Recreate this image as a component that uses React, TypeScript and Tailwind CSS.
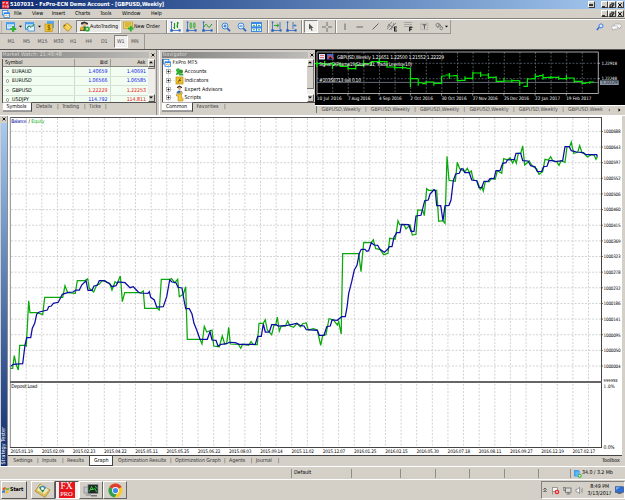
import type { ReactNode } from "react";

type Point = [number, number];

// Equity line of the strategy tester graph
const equity: Point[] = [
  [10, 368.3], [12.7, 368.3], [14.3, 355.7], [16, 364], [18.3, 370], [19.7, 345.3], [24.7, 345.3],
  [26.3, 346], [28.7, 300.7], [30, 312.7], [37.3, 312.7], [42.7, 314.7], [44.7, 297.3], [62.7, 297.3],
  [65, 285.7], [67.7, 292.7], [75.3, 293.3], [77.3, 280.7], [84.7, 280.7], [87.7, 278.7], [89.3, 288.3],
  [93.7, 292], [96.7, 285], [99.3, 284.3], [102, 280.7], [106, 281.7], [110, 284], [112, 290],
  [115, 281.7], [117.3, 283.3], [120.3, 276], [121, 283.3], [122.3, 301.7], [124.7, 292.7], [141, 292.7],
  [143.3, 291], [144.7, 308.3], [157.3, 308.3], [159.3, 310], [161.3, 279.3], [170, 279.3], [171.5, 278.5],
  [174.7, 282.7], [177.7, 279.3], [179.3, 296.7], [183.3, 294.3], [185.7, 286.7], [187.3, 339.3],
  [200, 339.3], [202, 344], [204.3, 326.3], [206.7, 332], [212, 330], [213.7, 346], [219.3, 346.7],
  [222.3, 336], [224.7, 344], [226.7, 343.3], [228.7, 327.3], [230.3, 344], [238.3, 344.3],
  [240.7, 348.3], [242.7, 344.3], [248.7, 345.3], [251, 341.7], [253.3, 344.7], [257.3, 344.7],
  [259, 323.3], [263.3, 323.3], [265.3, 319.7], [267.3, 330], [271.7, 334.7], [274, 325], [275.7, 325],
  [277.3, 317], [279.3, 331], [281.3, 326], [285.3, 326], [287.7, 321], [290, 326], [293.7, 327.3],
  [297, 323.3], [300.3, 326.7], [303, 323.5], [306.3, 323], [308.3, 330], [313.3, 328.7], [317.3, 330],
  [320.7, 345.3], [322.7, 335.3], [326, 334.7], [329, 318.7], [333.3, 319.7], [337.3, 325],
  [338.7, 321.7], [341.2, 334], [342.7, 253.7], [358.7, 253.7], [361, 271.7], [363.7, 242.3],
  [371.3, 242.7], [373.3, 239.7], [375.7, 248.7], [380, 249.3], [383.7, 254.7], [388, 253.3],
  [389.7, 238.3], [395.3, 239], [398, 220.7], [399.7, 224.7], [404, 224.7], [406, 229], [410, 225],
  [412.3, 235], [416, 234.3], [417.7, 210], [422.7, 210], [424.3, 215.7], [426.7, 188.7],
  [428.7, 190.3], [436.7, 190.3], [438.7, 221.3], [442.7, 220.7], [445, 223.3], [447, 156.3],
  [449, 180.3], [455.3, 181.3], [457.3, 162.3], [459.7, 168.7], [465, 171.7], [467.3, 168.3],
  [469.3, 172.7], [471.3, 171], [473.3, 180], [477, 180.7], [480.3, 189.3], [482, 186.7], [483.3, 191],
  [485.3, 181.7], [489.3, 181.7], [491.3, 178.3], [495.3, 179.3], [497.3, 170.7], [501.7, 173.3],
  [503.7, 158.7], [507.7, 160], [510, 157.7], [512.7, 163], [514.7, 159], [516.3, 163.3],
  [518.3, 153.3], [520.7, 153.3], [522.7, 146], [524.7, 165], [529.3, 161], [532, 165.7], [536.7, 169],
  [539, 174.3], [542.7, 171.7], [545, 159.3], [548.3, 160], [550.7, 156.7], [552.7, 160.7],
  [556.7, 161.7], [559, 165.3], [561, 160.7], [565, 162.3], [567, 146.7], [569.7, 146.7], [571.3, 142],
  [573.7, 153.3], [577.7, 152.3], [579.7, 145.7], [582, 152.7], [584.7, 154], [587.3, 157],
  [591.3, 154.7], [594, 155], [596, 159.3], [597.3, 156.7],
];

const balance: Point[] = [
  [10, 366.7], [13.3, 364.3], [22.7, 363.7], [25, 345], [26.7, 337.7], [30.7, 337.7], [32.3, 328.3],
  [34.7, 323.3], [36.7, 314], [39.3, 312], [47.3, 310], [48.7, 306.7], [51.3, 306], [53.3, 303.3],
  [58.3, 302.3], [62.3, 294.3], [68.3, 292.3], [73, 292], [76, 290], [79.3, 290], [81.7, 285],
  [86, 280.7], [88, 290.3], [92, 290.3], [94, 286], [97.3, 285.3], [99.3, 280.7], [104.7, 280.7],
  [107.3, 282.7], [109, 283], [112, 286.7], [116, 285.7], [118, 282], [125, 282.7], [130, 287.7],
  [133.3, 286.7], [138.3, 292], [140, 293], [148, 293.3], [149.3, 291.7], [150.7, 297.3],
  [154.3, 300], [156.7, 307], [163.3, 306.7], [166.7, 296.7], [169.7, 280], [172, 282],
  [176, 282.7], [178, 287.3], [182, 288], [184, 300], [185.7, 308.7], [189.3, 308.7], [192, 314],
  [194, 323.3], [196.7, 330], [200, 339.3], [207.3, 339.3], [210, 331.7], [212, 340], [216, 340.3],
  [218, 346], [221.3, 344.3], [226.7, 343.7], [229.3, 342.3], [235.3, 342.7], [239.3, 344.3],
  [255.3, 344.3], [257.7, 336.3], [261.3, 336.3], [263.3, 324], [265.3, 332], [269.3, 332],
  [271.7, 324.7], [276, 324.7], [278.3, 326], [287.3, 325.3], [296.7, 323.3], [300.7, 325.7],
  [304, 326], [306.3, 329.7], [317.3, 330.3], [319.3, 335.3], [324, 335.3], [326.7, 326.7],
  [330.3, 326], [332, 320], [337.3, 320.3], [341.7, 316.7], [345.3, 316.7], [347, 307.3],
  [348.7, 293.3], [351.7, 281.7], [354.3, 270], [357, 265.3], [359.3, 253.3], [361.3, 249.3],
  [365, 249.3], [366.7, 251.3], [368.7, 250.7], [371.3, 242.7], [374, 245], [377.7, 245.3],
  [380, 249.3], [384.3, 252.3], [387.7, 249.3], [389.3, 246.7], [392, 246.7], [394, 237.3],
  [396.7, 232.7], [400, 232.7], [401.5, 224.5], [408.7, 224.7], [411, 231.3], [414, 231.3],
  [416, 216], [421, 215.3], [424.7, 200.7], [428.3, 200], [430, 194], [434, 189.7], [435.3, 190.7],
  [436.7, 205.7], [440.7, 205.7], [443, 220.7], [445, 205.7], [449, 205.3], [451, 200],
  [453.3, 180.7], [455.7, 174], [459.3, 173.3], [461.3, 168.7], [463.3, 169], [464.7, 172.7],
  [469.3, 172.7], [471.7, 180], [476.7, 180.7], [479, 187.7], [481.7, 187.7], [484, 181.3],
  [488, 181.3], [490, 178.7], [494, 178.7], [496, 170.7], [500, 170.7], [502.7, 163.3], [506, 162.7],
  [507.3, 160], [514.3, 159.3], [516, 153.3], [520.7, 153.3], [522.7, 160.7], [528, 161],
  [530.7, 165.7], [535, 166.7], [537.3, 171.7], [541.7, 171.3], [543.7, 166.7], [547, 166.3],
  [549, 160.7], [552.7, 160.7], [555.3, 161.7], [562.7, 160.7], [565, 146.7], [569.3, 146.7],
  [571.3, 150.7], [576.7, 152], [583.3, 152.7], [586, 154.7], [596.7, 154.7], [597.3, 156.7],
];

const axisValues = [
  "1000688", "1000643", "1000597", "1000552", "1000506", "1000460", "1000415", "1000369",
  "1000323", "1000278", "1000232", "1000186", "1000141", "1000095", "1000050", "1000004",
];

const axisDates = [
  "2015.01.19", "2015.02.09", "2015.02.23", "2015.04.22", "2015.05.11", "2015.05.25", "2015.06.22",
  "2015.08.03", "2015.09.14", "2015.11.02", "2015.12.07", "2016.01.25", "2016.02.15", "2016.05.30",
  "2016.07.18", "2016.08.11", "2016.09.27", "2016.12.19", "2017.02.17",
];

// [high, low, open, close] of each weekly bar
const weeklyBars = [
  [44, 60, 50, 50], [42, 58, 50, 52], [46, 66, 50, 52], [46, 60, 54, 58], [50, 68, 58, 65],
  [48, 68, 65, 55], [40, 60, 55, 50], [42, 56, 50, 44], [34, 50, 44, 44], [42, 62, 44, 60],
  [52, 68, 60, 62], [55, 67, 62, 62], [62, 120, 64, 95], [95, 116, 95, 107], [102, 112, 110, 105],
  [104, 116, 105, 109], [87, 110, 109, 87], [78, 95, 84, 87], [84, 102, 86, 101], [88, 102, 100, 94],
  [74, 98, 94, 78], [74, 90, 78, 84], [78, 96, 84, 91], [88, 106, 91, 103], [93, 104, 103, 102],
  [97, 107, 102, 101], [102, 116, 101, 108], [93, 120, 118, 96], [80, 98, 95, 88], [80, 98, 86, 92],
  [86, 96, 91, 91], [88, 98, 91, 95], [84, 99, 95, 93], [92, 108, 93, 103], [102, 112, 103, 109],
  [103, 110, 107, 105],
];

const weeklyDates = [
  "10 Jul 2016", "7 Aug 2016", "4 Sep 2016", "2 Oct 2016", "30 Oct 2016",
  "27 Nov 2016", "25 Dec 2016", "22 Jan 2017", "19 Feb 2017",
];

const menu = [
  { label: "File", width: 18 },
  { label: "View", width: 19.7 },
  { label: "Insert", width: 23.3 },
  { label: "Charts", width: 25 },
  { label: "Tools", width: 22 },
  { label: "Window", width: 29 },
  { label: "Help", width: 20 },
];

const timeframes = [
  { label: "M1", width: 15.5 },
  { label: "M5", width: 14.5 },
  { label: "M15", width: 16 },
  { label: "M30", width: 16.5 },
  { label: "H1", width: 15.5 },
  { label: "H4", width: 15.5 },
  { label: "D1", width: 13 },
  { label: "W1", width: 13.5, active: true },
  { label: "MN", width: 16.5 },
];

const quotes = [
  { symbol: "EURAUD", bid: "1.40659", ask: "1.40691", up: true },
  { symbol: "EURUSD", bid: "1.06566", ask: "1.06585", up: true },
  { symbol: "GBPUSD", bid: "1.22229", ask: "1.22253", up: false },
  { symbol: "USDJPY", bid: "114.792", ask: "114.811", up: true, askDown: true },
];

const testerTabs = [
  { label: "Settings", width: 28.7 },
  { label: "Inputs", width: 25 },
  { label: "Results", width: 22.5 },
  { label: "Graph", width: 23.5, active: true },
  { label: "Optimization Results", width: 57 },
  { label: "Optimization Graph", width: 54 },
  { label: "Agents", width: 26.7 },
  { label: "Journal", width: 27 },
];

const statusCells = [59.5, 49, 35.5, 34, 34.5, 34.5, 31.5];

function Svg({ w, h, children }: { w: number; h: number; children: ReactNode }) {
  return (
    <svg className="shrink-0" width={w} height={h} viewBox={`0 0 ${w} ${h}`} fill="none">
      {children}
    </svg>
  );
}

function WindowButton({ kind }: { kind: "arrows" | "min" | "restore" | "close" }) {
  return (
    <div className="flex h-[7px] w-[7.5px] shrink-0 items-center justify-center border-[0.5px] border-t-white border-r-[#404040] border-b-[#404040] border-l-white bg-[#d4d0c8]">
      <Svg w={6} h={6}>
        {kind === "arrows" && <path d="M1 3h4M2 2v2M4 2v2" stroke="#000" />}
        {kind === "min" && <path d="M1 4.8h3" stroke="#000" />}
        {kind === "restore" && <path d="M2.2 1.2h2.6v2H4M1 2.8h2.6v2.2H1z" stroke="#000" strokeWidth=".9" />}
        {kind === "close" && <path d="M1.2 1.2l3.4 3.6M4.6 1.2L1.2 4.8" stroke="#000" />}
      </Svg>
    </div>
  );
}

function Divider() {
  return <div className="h-[13px] w-[2px] shrink-0 border-l border-[#8c8a84] bg-white" />;
}

function Caret() {
  return (
    <Svg w={3} h={3}>
      <path d="M0 .8h3L1.5 2.5z" fill="#000" />
    </Svg>
  );
}

// Blue L-shaped axes shared by the chart type icons
function Axes({ children }: { children?: ReactNode }) {
  return (
    <Svg w={11} h={11}>
      <path d="M1.5 1v8.5H10" stroke="#3a74c4" strokeWidth=".9" />
      <path d="M.3 8.3h2.4v2.4H.3zM8.6 8.3h2v2.2h-2zM.8.5h1.5v1.6H.8z" fill="#2460c0" />
      {children}
    </Svg>
  );
}

function WindowsIcon({ badge }: { badge?: string }) {
  return (
    <Svg w={11} h={10}>
      <rect x=".5" y=".8" width="8" height="6.4" fill="#d8ecff" stroke="#3b8ee0" />
      <rect x="0" y=".3" width="9" height="2" fill="#4aa0ee" />
      {badge ? (
        <>
          <path d="M2 4h4" stroke="#7ab8ee" strokeWidth=".8" />
          <path d="M7.2 4v6M4.2 7h6" stroke={badge} strokeWidth="2.2" />
        </>
      ) : (
        <>
          <rect x="3" y="4" width="6.5" height="5" fill="#e8f4ff" stroke="#3b8ee0" strokeWidth=".8" />
          <path d="M1.5 6.5L4 4l2 1.5L9.5 2" stroke="#2e9a35" />
        </>
      )}
    </Svg>
  );
}

function LayersIcon() {
  return (
    <Svg w={8} h={8}>
      <rect x=".4" y=".5" width="5.4" height="4.5" fill="#fff" stroke="#2b87dc" strokeWidth=".8" />
      <rect x="2" y="2.8" width="5.5" height="4.6" fill="#fff" stroke="#2b87dc" strokeWidth=".8" />
      <path d="M2 3.4h5.5" stroke="#2b87dc" strokeWidth="1.3" />
      <path d="M3 6l1.3-1L5.5 6l1.3-1" stroke="#e07818" strokeWidth=".7" />
    </Svg>
  );
}

function TitleBar() {
  return (
    <header className="flex h-[9px] items-center bg-linear-to-r from-[#0f2b72] to-[#a6caf0] pl-[1.5px] pr-[1px]">
      <Svg w={7} h={8}>
        <rect width="7" height="7.5" fill="#e3202b" />
        <path d="M1 1.4h2M1 1v2.3M4 1l2 2.2M6 1L4 3.2M1 4.5v2M1 5h1.6M3.4 4.7v1.8M5 4.8h1.4v1.4H5z" stroke="#fff" strokeWidth=".6" />
      </Svg>
      <div className="ml-[1.5px] flex-1 whitespace-nowrap text-[5.5px] font-bold tracking-[-0.04px] text-white">
        5107031 - FxPro-ECN Demo Account - [GBPUSD,Weekly]
      </div>
      <WindowButton kind="arrows" />
      <div className="w-[5.5px]" />
      <WindowButton kind="min" />
      <WindowButton kind="restore" />
      <div className="w-[1px]" />
      <WindowButton kind="close" />
    </header>
  );
}

function MenuBar() {
  return (
    <nav className="flex h-[10px] items-center border-b border-[#85837d] pl-[2px] pr-[1px]">
      <LayersIcon />
      <div className="ml-[4px] flex flex-1">
        {menu.map((item) => (
          <div key={item.label} className="whitespace-nowrap" style={{ width: item.width }}>
            {item.label}
          </div>
        ))}
      </div>
      <WindowButton kind="min" />
      <WindowButton kind="restore" />
      <div className="w-[1px]" />
      <WindowButton kind="close" />
    </nav>
  );
}

function Toolbar() {
  return (
    <div className="flex h-[15px] items-center border-t border-white">
      <div className="flex h-[14px] w-[450.5px] shrink-0 items-center border-r border-b border-[#9b9993] pl-[1px]">
        <div className="h-[12px] w-[1px] border-l border-[#b5b2aa]" />
        <div className="flex w-[56px] items-center pl-[4px]">
          <WindowsIcon badge="#35b235" />
          <div className="w-[1.5px]" />
          <Caret />
          <div className="w-[3.5px]" />
          <WindowsIcon />
          <div className="w-[1.5px]" />
          <Caret />
          <div className="w-[3.5px]" />
          <Svg w={11} h={11}>
            <rect x="3" y="0" width="7" height="7" fill="#5aa6ec" />
            <rect x="1" y="3" width="7.5" height="7.5" fill="#f0c22c" stroke="#b98a10" strokeWidth=".6" />
            <path d="M6.3 4.6H4v2h2v2H3.4M5 3.8v5.6" stroke="#7c5a06" strokeWidth=".7" />
          </Svg>
        </div>
        <Divider />
        <div className="w-[15.5px] pl-[1.5px]">
          <Svg w={11} h={10}>
            <path d="M1 5l4-4 5 4-4 4.5z" fill="#f0c43a" stroke="#b88a1c" strokeWidth=".7" />
            <path d="M3.5 4.5l3.5 3M5 3l3 3" stroke="#fff3b0" strokeWidth=".8" />
            <circle cx="2.5" cy="3.5" r="1" fill="#8a6414" />
          </Svg>
        </div>
        <div className="flex h-[13px] w-[45.5px] items-center border-[0.5px] border-t-[#808080] border-r-white border-b-white border-l-[#808080] bg-[#eceae6] pl-[2px]">
          <Svg w={11} h={11}>
            <path d="M2 1.5l3.5-1L9 2v1.5H2z" fill="#333" />
            <circle cx="5.5" cy="4" r="1.8" fill="#e4b98c" />
            <path d="M1 10c0-4 2-4.5 4.5-4.5S8 7 8 10z" fill="#4a4a4a" />
            <circle cx="3" cy="7.5" r="2" fill="#dcae28" />
            <circle cx="8.3" cy="8" r="2.6" fill="#2fae37" />
            <path d="M7.5 6.7v2.6l2.1-1.3z" fill="#fff" />
          </Svg>
          <span className="ml-[0.5px] whitespace-nowrap">AutoTrading</span>
        </div>
        <div className="flex w-[45px] items-center pl-[1.5px]">
          <Svg w={11} h={11}>
            <rect x=".5" y="1" width="9" height="6.5" fill="#f4d254" stroke="#c19a1c" strokeWidth=".7" />
            <path d="M2 3h6M2 5h4" stroke="#9a7510" strokeWidth=".6" />
            <path d="M7.8 4.8v5.6M5 7.6h5.6" stroke="#35ae38" strokeWidth="2" />
          </Svg>
          <span className="ml-[0.5px] whitespace-nowrap tracking-[0.05px]">New Order</span>
        </div>
        <Divider />
        <div className="flex h-[13px] w-[14.5px] items-center justify-center bg-[#f1efec]">
          <Axes>
            <path d="M4.5 2v6M3.5 6.5h1M7.5 1v6M7.5 2H9M6.3 5h1.2" stroke="#1b9a22" strokeWidth="1.1" />
          </Axes>
        </div>
        <div className="w-[18px] pl-[3.5px]">
          <Axes>
            <path d="M4 2.5h1.6v4H4zM7.4 2.5H9.200v3.8H7.4zM4.8 1v7M8.3 1v7" stroke="#3cae3e" strokeWidth=".7" />
          </Axes>
        </div>
        <div className="w-[15.5px] pl-[1.5px]">
          <Axes>
            <path d="M2 6c2-4 2.5-3 4-.5S8 5 10 3" stroke="#1b9a22" />
          </Axes>
        </div>
        <Divider />
        {["M5.5 4h-3M4 2.5v3", "M5.5 4h-3"].map((d) => (
          <div key={d} className="w-[15.5px] pl-[3px]">
            <Svg w={10} h={10}>
              <path d="M6 6l3 3.2" stroke="#2c62ba" strokeWidth="1.8" />
              <circle cx="4" cy="4" r="3" fill="#e4f2ff" stroke="#3f88dc" />
              <path d={d} stroke="#1b56b8" strokeWidth=".9" />
            </Svg>
          </div>
        ))}
        <div className="w-[18px] pl-[2px]">
          <Svg w={11} h={10}>
            <rect width="11" height="10" fill="#3b8be4" />
            <path d="M1 2h4v2.3H1zM6 2h4v2.3H6zM1 6.5h4V9H1zM6 6.5h4V9H6z" fill="#e8f6ff" />
            <path d="M2 3.4h2M7 3.4h2M2 7.8h2M7 7.8h2" stroke="#2ea23a" strokeWidth=".9" />
          </Svg>
        </div>
        <Divider />
        <div className="w-[16px] pl-[1.5px]">
          <Axes>
            <path d="M3 4.5h4M6 2.8l2 1.7-2 1.7" stroke="#28a32e" />
            <path d="M9 1v7" stroke="#2c68c0" strokeWidth=".8" />
          </Axes>
        </div>
        <div className="w-[16px] pl-[1px]">
          <Axes>
            <path d="M7 1v7" stroke="#2c68c0" strokeWidth=".8" />
            <path d="M10.5 4.5H8M9.2 3.2L8 4.5l1.2 1.3" stroke="#2c68c0" strokeWidth=".8" />
          </Axes>
        </div>
        <Divider />
        <div className="ml-[0.5px] flex h-[13px] w-[14.5px] items-center justify-center border-[0.5px] border-t-[#808080] border-r-white border-b-white border-l-[#808080] bg-[#f1efec]">
          <Svg w={6} h={8}>
            <path d="M1 .5v6l1.5-1.3L3.6 8l1-.5-1-2.4h1.9z" fill="#555" />
          </Svg>
        </div>
        <div className="w-[17px] pl-[4px]">
          <Svg w={10} h={10}>
            <path d="M5 0v4M5 6v4M0 5h4M6 5h4" stroke="#555" strokeWidth=".8" />
          </Svg>
        </div>
        <Divider />
        <div className="w-[18px] pl-[5.5px]">
          <Svg w={4} h={8}>
            <path d="M2 .5v6.5" stroke="#666" />
          </Svg>
        </div>
        <div className="w-[16px]">
          <Svg w={9} h={8}>
            <path d="M1.5 4h6.5" stroke="#666" />
          </Svg>
        </div>
        <div className="w-[16px]">
          <Svg w={9} h={9}>
            <path d="M1.5 7.5l6-6" stroke="#666" />
          </Svg>
        </div>
        <div className="w-[16.5px]">
          <Svg w={11} h={11}>
            <path d="M0 6l5-5M2 9l7-7M0 8.5L3 4M4 9L7 2M1 3l6 4" stroke="#777" strokeWidth=".8" />
            <path d="M7.5 6v4M7 6h3M7 8h2.6M7 10h3" stroke="#111" strokeWidth=".9" />
          </Svg>
        </div>
        <div className="w-[16px]">
          <Svg w={11} h={11}>
            <path d="M0 1.5h8M0 3.5h8M0 5.5h8" stroke="#999" strokeWidth=".8" />
            <path d="M5.7 6v4.2M5.5 6.3h3M5.5 8.2h2.4" stroke="#111" strokeWidth="1.1" />
          </Svg>
        </div>
        <div className="w-[15.5px]">
          <Svg w={9} h={9}>
            <rect x=".8" y="1.2" width="7" height="6.5" stroke="#888" strokeWidth=".6" strokeDasharray="1 .8" />
            <path d="M2.4 2.8h4M4.4 2.8v4" stroke="#555" />
          </Svg>
        </div>
        <div className="w-[10px]">
          <Svg w={9} h={9}>
            <circle cx="2.5" cy="3" r="1.6" stroke="#666" strokeWidth=".7" />
            <path d="M3.5 1l3.3 4M2 5.8L6 3" stroke="#666" strokeWidth=".7" />
            <circle cx="6.3" cy="6.3" r="1.4" stroke="#666" strokeWidth=".7" />
          </Svg>
        </div>
        <Caret />
      </div>
      <div className="ml-auto flex items-center gap-[7px] pr-[3px]">
        <Svg w={8} h={8}>
          <path d="M3.3 4.3L.8 7" stroke="#3068d0" strokeWidth="1.5" />
          <circle cx="5" cy="2.9" r="2" fill="#dcebff" stroke="#3b7ade" />
        </Svg>
        <Svg w={11} h={8}>
          <path d="M4.5 1h4c2.5 0 2.5 3.5.5 3.7V6L7.5 4.7h-3c-2-.3-2-3.5 0-3.7z" fill="#f6f6f6" stroke="#999" strokeWidth=".6" />
          <path d="M2.3 3h3c1.8 0 1.8 3 0 3H3.5L2 7.3V6C0 5.5.5 3 2.3 3z" fill="#fff" stroke="#999" strokeWidth=".6" />
        </Svg>
      </div>
    </div>
  );
}

function TimeframeBar() {
  return (
    <div className="flex h-[15px] items-center">
      <div className="ml-[1px] flex h-[15px] items-center border-r border-[#9b9993] pl-[6.5px] text-[#4a4a4a]">
        {timeframes.map((t) =>
          t.active ? (
            <div
              key={t.label}
              className="mr-[3.5px] flex h-[13.5px] items-center justify-center border-[0.5px] border-t-[#808080] border-r-white border-b-white border-l-[#808080] bg-[#f1efec]"
              style={{ width: t.width }}
            >
              {t.label}
            </div>
          ) : (
            <div key={t.label} style={{ width: t.width - (t.label === "MN" ? 3.5 : 0) }}>
              {t.label}
            </div>
          ),
        )}
      </div>
    </div>
  );
}

function PanelTitle({ title }: { title: string }) {
  return (
    <div className="flex h-[6px] items-center">
      <div className="flex h-[5.5px] flex-1 items-center bg-linear-to-r from-[#828282] to-[#bdbcb9] pl-[1px] tracking-[0.1px] text-[#dedcd6]">
        {title}
      </div>
      <div className="flex w-[7px] justify-center">
        <Svg w={4} h={4}>
          <path d="M.6.6l2.8 2.8M3.4.6L.6 3.4" stroke="#000" strokeWidth=".9" />
        </Svg>
      </div>
    </div>
  );
}

function ScrollBar({ thumb }: { thumb: number }) {
  const button =
    "flex h-[8px] items-center justify-center border-[0.5px] border-t-white border-r-[#555] border-b-[#555] border-l-white bg-[#d4d0c8]";
  return (
    <div className="flex w-[7.5px] shrink-0 flex-col bg-[#efedea]">
      <div className={button}>
        <Svg w={4} h={3}>
          <path d="M0 2.3l2-2 2 2z" fill="#000" />
        </Svg>
      </div>
      <div className="border-r border-b border-[#777] bg-[#d4d0c8]" style={{ height: thumb }} />
      <div className="flex-1" />
      <div className={button}>
        <Svg w={4} h={3}>
          <path d="M0 .5l2 2 2-2z" fill="#000" />
        </Svg>
      </div>
    </div>
  );
}

function MarketWatch() {
  return (
    <section className="flex w-[157px] shrink-0 flex-col border-r border-[#8f8d87] pt-[2px] pl-[1.5px]">
      <PanelTitle title="Market Watch: 21:49:48" />
      <div className="mt-[0.5px] flex h-[44px] border-b border-l border-[#555] pr-[1px]">
        <div className="flex-1 overflow-hidden bg-[#f0fdf0]">
          <div className="flex h-[8.5px] items-center border-b border-[#8a8882] bg-[#d4d0c8]">
            <div className="w-[71px] pl-[2.5px]">Symbol</div>
            <div className="h-full border-l border-[#9b9993]" />
            <div className="w-[35px] pr-[2px] text-right">Bid</div>
            <div className="h-full border-l border-[#9b9993]" />
            <div className="flex-1 pr-[2px] text-right">Ask</div>
          </div>
          {quotes.map((q) => (
            <div key={q.symbol} className="flex h-[9.6px] items-center border-b-[0.5px] border-[#d6e2d6]">
              <div className="flex h-full w-[71px] items-center pl-[3px]">
                <span className="mr-[3px] size-[3.5px] rounded-full border border-[#8f8f8f] bg-white" />
                {q.symbol}
              </div>
              <div className="h-full border-l border-[#d0dcd0]" />
              <div className={q.up ? "w-[35px] pr-[2px] text-right text-[#1616f0]" : "w-[35px] pr-[2px] text-right text-[#f01616]"}>
                {q.bid}
              </div>
              <div className="h-full border-l border-[#d0dcd0]" />
              <div className={q.up && !q.askDown ? "flex-1 pr-[1.5px] text-right text-[#1616f0]" : "flex-1 pr-[1.5px] text-right text-[#f01616]"}>
                {q.ask}
              </div>
            </div>
          ))}
        </div>
        <ScrollBar thumb={2} />
      </div>
      <div className="flex h-[9px] items-center text-[#3a3a3a]">
        <div className="ml-[1px] flex h-[9px] w-[29px] -translate-y-[0.5px] items-center justify-center border-r border-b border-[#444] bg-white text-black">
          Symbols
        </div>
        <div className="ml-[4.5px] w-[21px]">Details</div>
        <div className="w-[5px]">|</div>
        <div className="w-[22px]">Trading</div>
        <div className="w-[5px]">|</div>
        <div className="w-[16px]">Ticks</div>
        <div>|</div>
      </div>
    </section>
  );
}

function TreeRow({ label, children }: { label: string; children: ReactNode }) {
  return (
    <div className="flex h-[8.7px] items-center pl-[3px]">
      <Svg w={9} h={9}>
        <path d="M2.5 0v9M2.5 4.5h6" stroke="#aaa" strokeWidth=".5" strokeDasharray=".7 .7" />
        <rect x=".5" y="2.5" width="4" height="4" fill="#fff" stroke="#888" strokeWidth=".6" />
        <path d="M1.3 4.5h2.4M2.5 3.3v2.4" stroke="#000" strokeWidth=".7" />
      </Svg>
      <Svg w={9} h={9}>{children}</Svg>
      <span className="ml-[1px] tracking-[0.05px]">{label}</span>
    </div>
  );
}

function Navigator() {
  return (
    <section className="flex w-[156px] shrink-0 flex-col border-l border-white pt-[2px] pl-[1.5px]">
      <PanelTitle title="Navigator" />
      <div className="mt-[0.5px] flex h-[44px] border-b border-l border-[#555] pr-[1px]">
        <div className="flex-1 overflow-hidden bg-white">
          <div className="flex h-[9px] items-center pl-[0.5px]">
            <LayersIcon />
            <span className="ml-[1.5px] tracking-[0.05px]">FxPro MT5</span>
          </div>
          <TreeRow label="Accounts">
            <circle cx="3" cy="3.3" r="2" fill="#36b43a" />
            <circle cx="6" cy="4.5" r="2" fill="#249628" />
            <path d="M1 8c0-4 4-4 4-1M4 8.5c0-3 4.5-3 4.5 0z" fill="#2fa834" />
          </TreeRow>
          <TreeRow label="Indicators">
            <rect x="1" y="1" width="7" height="7" fill="#f0c030" stroke="#b78c14" strokeWidth=".7" />
            <path d="M5.8 2.5c-2-.5-1 4-3 4M3.5 4.5h2.5" stroke="#6b4e08" strokeWidth=".8" />
          </TreeRow>
          <TreeRow label="Expert Advisors">
            <path d="M2 2L4.5.5 7 2v1H2z" fill="#333" />
            <circle cx="4.5" cy="3.5" r="1.4" fill="#d8a878" />
            <path d="M1.5 8.5c0-4 6-4 6 0z" fill="#3c6fb4" />
            <path d="M5 6l3.5 2.5H5z" fill="#e0b030" />
          </TreeRow>
          <TreeRow label="Scripts">
            <path d="M1.5 1h5v4H8v3H3V3H1.5z" fill="#f2c63c" stroke="#b88a18" strokeWidth=".6" />
          </TreeRow>
        </div>
        <ScrollBar thumb={22} />
      </div>
      <div className="flex h-[9px] items-center text-[#3a3a3a]">
        <div className="flex h-[9px] w-[31px] -translate-y-[0.5px] items-center justify-center border-r border-b border-[#444] bg-white text-black">
          Common
        </div>
        <div className="ml-[4px] w-[27.5px] tracking-[0.05px]">Favorites</div>
        <div>|</div>
      </div>
    </section>
  );
}

function WeeklyChart() {
  return (
    <svg className="block" width="310" height="55" viewBox="315 49 310 55" fontFamily='"DejaVu Sans Condensed", "DejaVu Sans", sans-serif'>
      <rect x="315" y="49" width="310" height="55" fill="#000" />
      {Array.from({ length: 17 }, (_, i) => (
        <path key={i} d={`M${332.7 + i * 15.6} 51V92`} stroke="#5c6675" strokeWidth=".8" strokeDasharray="2 1.5" />
      ))}
      <path d="M317 62.3H598M317 77.7H598" stroke="#5c6675" strokeWidth=".8" strokeDasharray="2 1.5" />
      <path d="M317 81.4H598" stroke="#7d8794" strokeWidth=".8" />
      <path d="M317 51H598.3V92.5H317z" stroke="#b8b8b8" strokeWidth=".9" fill="none" />
      <path d="M598 62.3h2M598 77.7h2" stroke="#b8b8b8" strokeWidth=".8" />
      {weeklyBars.map(([high, low, open, close], i) => {
        const x = 316.8 + i * 7.8;
        const y = (v: number) => 46 + v / 3;
        return (
          <path
            key={i}
            d={`M${x} ${y(high)}V${y(low)}M${x - 4} ${y(open)}H${x}M${x} ${y(close)}H${x + 4}`}
            fill="none"
            stroke="#00e800"
            strokeWidth="1.2"
          />
        );
      })}
      <rect x="319" y="53" width="6" height="5.5" fill="#dfe6ff" />
      <path d="M320 54.5h4M320 56.5h4" stroke="#e04848" strokeWidth=".8" />
      <rect x="327" y="53" width="6.5" height="5.5" fill="#4468d8" />
      <path d="M328 57.5l2-3 3.5 3.5" stroke="#e04848" strokeWidth="1.4" />
      <g fill="#f4f4f4" fontSize="5">
        <text x="337" y="57.7" textLength="107">GBPUSD,Weekly  1.21651 1.22500 1.21552 1.22229</text>
        <text x="319" y="65" textLength="93">Signal 2(Prama19,Slow=21, Trade Levels=10)</text>
        <text x="319" y="80.5" textLength="42">#10358713 sell 0.10</text>
        <text x="601.5" y="63.8" textLength="15.5" fontSize="4.5">1.22918</text>
        <text x="601.5" y="78.8" textLength="15.5" fontSize="4.5">1.22248</text>
        {weeklyDates.map((d, i) => (
          <text key={d} x={316.7 + i * 31.2} y="98.6" textLength={d.length > 10 ? 25 : 22.5} fontSize="4.6">
            {d}
          </text>
        ))}
      </g>
      <rect x="600" y="79.4" width="18.7" height="4.6" fill="#8793a5" />
      <text x="601.5" y="83.4" textLength="16" fontSize="4.5" fill="#111">1.22229</text>
      <path
        d="M317 92.5v2M347.9 92.5v2M379.1 92.5v2M410.3 92.5v2M441.5 92.5v2M472.7 92.5v2M503.9 92.5v2M535.1 92.5v2M566.3 92.5v2"
        stroke="#b8b8b8"
        strokeWidth=".8"
      />
    </svg>
  );
}

function ChartPane() {
  return (
    <section className="flex w-[310px] shrink-0 flex-col">
      <WeeklyChart />
      <div className="flex h-[8.5px] items-center border-t border-white text-[#4a4a4a]">
        <div className="ml-[1px] h-[7px] border-l border-[#777]" />
        <div className="ml-[4.5px] flex">
          {Array.from({ length: 6 }, (_, i) => (
            <div key={i} className="flex w-[49.3px] whitespace-nowrap">
              <div className="w-[43.5px] tracking-[0.03px]">{i < 5 ? "GBPUSD,Weekly" : "GBPUSD,Week"}</div>
              {i < 5 && <div>|</div>}
            </div>
          ))}
        </div>
        <div className="-ml-[9px] flex gap-[7px]">
          <Svg w={3} h={4}>
            <path d="M2 .5v3L.3 2z" fill="#888" />
          </Svg>
          <Svg w={3} h={4}>
            <path d="M.5.3v3.4l2-1.7z" fill="#000" />
          </Svg>
        </div>
      </div>
    </section>
  );
}

function TesterGraph() {
  const columns = Array.from({ length: 37 }, (_, i) => 26.2 + i * 15.62);
  return (
    <svg className="block" width="614" height="339" viewBox="8 116 614 339" fontFamily='"DejaVu Sans Condensed", "DejaVu Sans", sans-serif'>
      <rect x="8" y="116" width="614" height="339" fill="#fff" />
      {columns.map((x) => (
        <path key={x} d={`M${x} 118V447`} stroke="#d2d2d2" strokeDasharray="2 1.5" />
      ))}
      {axisValues.map((value, i) => (
        <g key={value}>
          <path d={`M11 ${131.4 + i * 15.64}H601`} stroke="#d2d2d2" strokeDasharray="2 1.5" />
          <path d={`M601 ${131.4 + i * 15.64}h2`} stroke="#444" strokeWidth=".8" />
          <text x="603.6" y={133.2 + i * 15.64} fontSize="4.6" textLength="17">
            {value}
          </text>
        </g>
      ))}
      <polyline points={equity.map((p) => p.join(",")).join(" ")} fill="none" stroke="#0aa80a" strokeWidth="1.25" />
      <polyline points={balance.map((p) => p.join(",")).join(" ")} fill="none" stroke="#0c0ca4" strokeWidth="1.25" />
      <path d="M10 117.5H601.5" stroke="#555" />
      <path d="M10.3 117V448" stroke="#888" />
      <path d="M601.5 117V448" stroke="#444" />
      <path d="M10 382H601.5" stroke="#666" strokeWidth="2" />
      <path d="M10 447.5H601.5" stroke="#444" />
      <text x="603.6" y="382" fontSize="4" textLength="14">999958</text>
      <g fontSize="5">
        <text x="11.3" y="122.7" fill="#0c0ca4" textLength="15.5">Balance</text>
        <text x="28.5" y="122.7">/</text>
        <text x="31.3" y="122.7" fill="#12b012" textLength="13">Equity</text>
        <text x="11.3" y="388.3" textLength="26">Deposit Load</text>
        <text x="603.6" y="387.6" textLength="11" fontSize="4.6">1.0%</text>
        <text x="603.6" y="449.3" textLength="11">0.0%</text>
        {axisDates.map((d, i) => (
          <text key={d} x={10.4 + i * 31.23} y="452.8" textLength="22.5" fontSize="4.7">
            {d}
          </text>
        ))}
      </g>
    </svg>
  );
}

function StrategyTester() {
  return (
    <section className="flex h-[351px] border-t border-white">
      <div className="flex w-[8px] shrink-0 flex-col border-r border-[#8f8d87] pr-[0.5px] pl-[1px]">
        <div className="flex h-[6.5px] items-center justify-center">
          <Svg w={4} h={4}>
            <path d="M.6.6l2.8 2.8M3.4.6L.6 3.4" stroke="#000" strokeWidth=".9" />
          </Svg>
        </div>
        <div className="flex flex-1 items-center bg-linear-to-b from-[#a6caf0] to-[#0f2b72] pb-[1px]">
          <span className="mt-auto rotate-180 text-[5.4px] tracking-[0.05px] whitespace-nowrap text-white [writing-mode:vertical-rl]">
            Strategy Tester
          </span>
        </div>
      </div>
      <div className="flex flex-1 flex-col">
        <TesterGraph />
        <div className="mr-[3px] flex h-[11px] items-center border-t border-[#444] text-[#3a3a3a]">
          <div className="flex h-full items-center pl-[5.3px]">
            {testerTabs.map((tab, i) =>
              tab.active ? (
                <div
                  key={tab.label}
                  className="mr-[5px] flex h-[9.5px] items-center justify-center self-start border-r border-b border-l border-[#444] bg-white text-black"
                  style={{ width: tab.width }}
                >
                  {tab.label}
                </div>
              ) : (
                <div key={tab.label} className="flex whitespace-nowrap" style={{ width: tab.width }}>
                  <span className="flex-1">{tab.label}</span>
                  {i !== 2 && <span className="mr-[4px] w-[1px]">|</span>}
                </div>
              ),
            )}
          </div>
          <div className="ml-auto pr-[2px] tracking-[0.05px] text-black">Toolbox</div>
        </div>
      </div>
    </section>
  );
}

function StatusBar() {
  return (
    <div className="flex h-[13px] items-center border-t border-white">
      <div className="w-[291px]" />
      {statusCells.map((width, i) => (
        <div key={i} className="flex h-[9px] items-center border-l border-[#8f8d87] pl-[2px]" style={{ width }}>
          {i === 0 && "Default"}
        </div>
      ))}
      <div className="flex h-[9px] items-center border-l border-[#8f8d87] pl-[2px]">
        <Svg w={9} h={9}>
          <path d="M1 1h4.5L7 2.5v5H1z" fill="#3fa0ea" />
          <rect x="2.5" y="2.5" width="4.5" height="5.5" fill="#62b6f2" />
          <circle cx="6.7" cy="6.7" r="2" fill="#2fae37" />
          <path d="M6.7 5.5v2.4M5.5 6.7h2.4" stroke="#fff" strokeWidth=".7" />
        </Svg>
        <span className="ml-[0.5px] whitespace-nowrap">34.0 / 3.2 Mb</span>
      </div>
    </div>
  );
}

function TaskButton({ pressed, children }: { pressed?: boolean; children: ReactNode }) {
  return (
    <div
      className={
        pressed
          ? "flex h-[18.5px] w-[24px] items-center justify-center border border-t-[#555] border-r-white border-b-white border-l-[#555] bg-[#f3f2f0]"
          : "flex h-[18.5px] w-[24px] items-center justify-center border border-t-white border-r-[#666] border-b-[#666] border-l-white"
      }
    >
      {children}
    </div>
  );
}

function TaskBar() {
  return (
    <footer className="flex h-[21px] items-center border-t border-white">
      <div className="ml-[1px] flex h-[18.5px] w-[26px] items-center border border-t-white border-r-[#555] border-b-[#555] border-l-white">
        <Svg w={8} h={8}>
          <path d="M.8 2.3C2 1 3 1.2 3.8 1.6L3.3 4C2.3 3.5 1.500 3.600.3 4.300z" fill="#e8501c" />
          <path d="M4.3 1.8c1 .5 2 .5 3.2-.5L7 3.7c-1 .8-2 .8-3.1.4z" fill="#6cb82c" />
          <path d="M.2 4.9c1-.7 2-.8 3-.3l-.6 2.4c-1-.5-1.800-.4-2.900.2z" fill="#3b78d8" />
          <path d="M3.8 4.7c1 .5 2 .4 3.100-.3l-.6 2.400c-1 .7-2 .8-3 .3z" fill="#f4c020" />
        </Svg>
        <span className="text-[5.4px] font-bold tracking-[-0.1px]">Start</span>
      </div>
      <div className="ml-[3.5px] flex">
        <TaskButton>
          <Svg w={17} h={16}>
            <path d="M1 9l5-7 10 6-5 7.5z" fill="#e0c25c" stroke="#a88b30" strokeWidth=".8" />
            <path d="M3 8l4-5.5 7.500 5-4 4.500z" fill="#f2e8b8" />
            <path d="M5 5.500c2-2.500 6-2 7 .5L8.700 10.500z" fill="#3e8fc8" />
            <path d="M5 5.500L8.700 10.500l1.300-2-3.500-3z" fill="#2f8844" />
            <circle cx="8.500" cy="6.500" r="1.500" fill="#f7f3e0" />
          </Svg>
        </TaskButton>
        <TaskButton pressed>
          <div className="flex h-[16px] w-[16px] flex-col items-center justify-center bg-[#e8141c] font-['Liberation_Serif',serif] leading-none tracking-normal text-white">
            <span className="text-[9.5px] leading-[7.5px]">FX</span>
            <span className="text-[6.5px] leading-[6px]">PRO</span>
          </div>
        </TaskButton>
        <TaskButton>
          <Svg w={16} h={15}>
            <rect x="1" y="4" width="7" height="6" fill="#c2c6c8" stroke="#777" strokeWidth=".6" />
            <path d="M2 11h6l1 2H3z" fill="#aaa" />
            <rect x="5" y="1.5" width="10" height="9" fill="#1e2a20" stroke="#889" strokeWidth=".7" />
            <path d="M6.5 8.5l2-5 1.5 3 2-1 1.5 3.5M7 6.5h3M12 3l2 2.5" stroke="#35c840" />
            <path d="M8 12h6v1.5H8z" fill="#777" />
          </Svg>
        </TaskButton>
        <div className="w-[0.8px]" />
        <TaskButton>
          <Svg w={15} h={15}>
            <circle cx="7.5" cy="7.5" r="7" fill="#f7ca2c" />
            <path d="M7.5 7.5L1.4 4a7 7 0 0 1 12.2 0z" fill="#e03c30" />
            <path d="M1.4 4A7 7 0 0 0 6.5 14.4L9.7 9z" fill="#2fa052" />
            <circle cx="7.5" cy="7.5" r="3.4" fill="#fff" />
            <circle cx="7.5" cy="7.5" r="2.6" fill="#4488ee" />
          </Svg>
        </TaskButton>
      </div>
      <div className="ml-auto flex h-[18.5px] w-[84.5px] items-center border border-t-[#808080] border-r-white border-b-white border-l-[#808080]">
        <div className="w-[10px] pl-[1.5px]">
          <Svg w={4} h={6}>
            <path d="M.6 2.7L2 1.2l1.4 1.5M.6 5L2 3.5 3.4 5" stroke="#111" strokeWidth=".8" />
          </Svg>
        </div>
        <div className="w-[12px]">
          <Svg w={9} h={9}>
            <path d="M1.5 1v7.5M1.5 1.5h5v4h-5" fill="#f6f6f6" stroke="#888" strokeWidth=".8" />
            <circle cx="6" cy="6" r="2.3" fill="#e02c28" />
            <path d="M5.2 5.2l1.6 1.6M6.8 5.2L5.2 6.8" stroke="#fff" strokeWidth=".7" />
          </Svg>
        </div>
        <div className="w-[12px]">
          <Svg w={9} h={9}>
            <rect x="2.5" y="2" width="5.5" height="4.3" fill="#ddd" stroke="#666" strokeWidth=".8" />
            <path d="M.8 1v3.5h2M1 1v1M2 1v1M3.5 8h4M5.3 6.5V8" stroke="#666" strokeWidth=".8" />
          </Svg>
        </div>
        <div className="w-[9px]">
          <Svg w={8} h={9}>
            <path d="M1 3.3h1.5l2-2.1v6.6l-2-2H1z" fill="#fff" stroke="#777" strokeWidth=".7" />
            <path d="M5.8 2.8c1 1 1 2.5 0 3.5M6.8 1.8c1.3 1.6 1.3 3.9 0 5.5" stroke="#888" strokeWidth=".6" />
          </Svg>
        </div>
        <div className="flex w-[31px] flex-col items-center gap-[2.3px] whitespace-nowrap">
          <span>8:49 PM</span>
          <span>3/13/2017</span>
        </div>
        <Svg w={9} h={8}>
          <rect x=".5" y=".8" width="8" height="5.5" fill="#2f6fd0" stroke="#1d3f88" strokeWidth=".6" />
          <path d="M1 1.3h4L1 4z" fill="#7db2f4" />
          <path d="M2.5 7.3h4" stroke="#333" strokeWidth=".8" />
        </Svg>
      </div>
    </footer>
  );
}

export default function App() {
  return (
    <div className="flex h-[500px] w-[625px] flex-col overflow-hidden bg-[#d4d0c8] font-['DejaVu_Sans_Condensed','DejaVu_Sans',sans-serif] text-[5.3px] leading-none tracking-[-0.05px] text-black">
      <TitleBar />
      <MenuBar />
      <Toolbar />
      <TimeframeBar />
      <div className="flex h-[66px] border-t border-[#555]">
        <MarketWatch />
        <div className="w-[2px] shrink-0" />
        <Navigator />
        <ChartPane />
      </div>
      <StrategyTester />
      <StatusBar />
      <TaskBar />
    </div>
  );
}
